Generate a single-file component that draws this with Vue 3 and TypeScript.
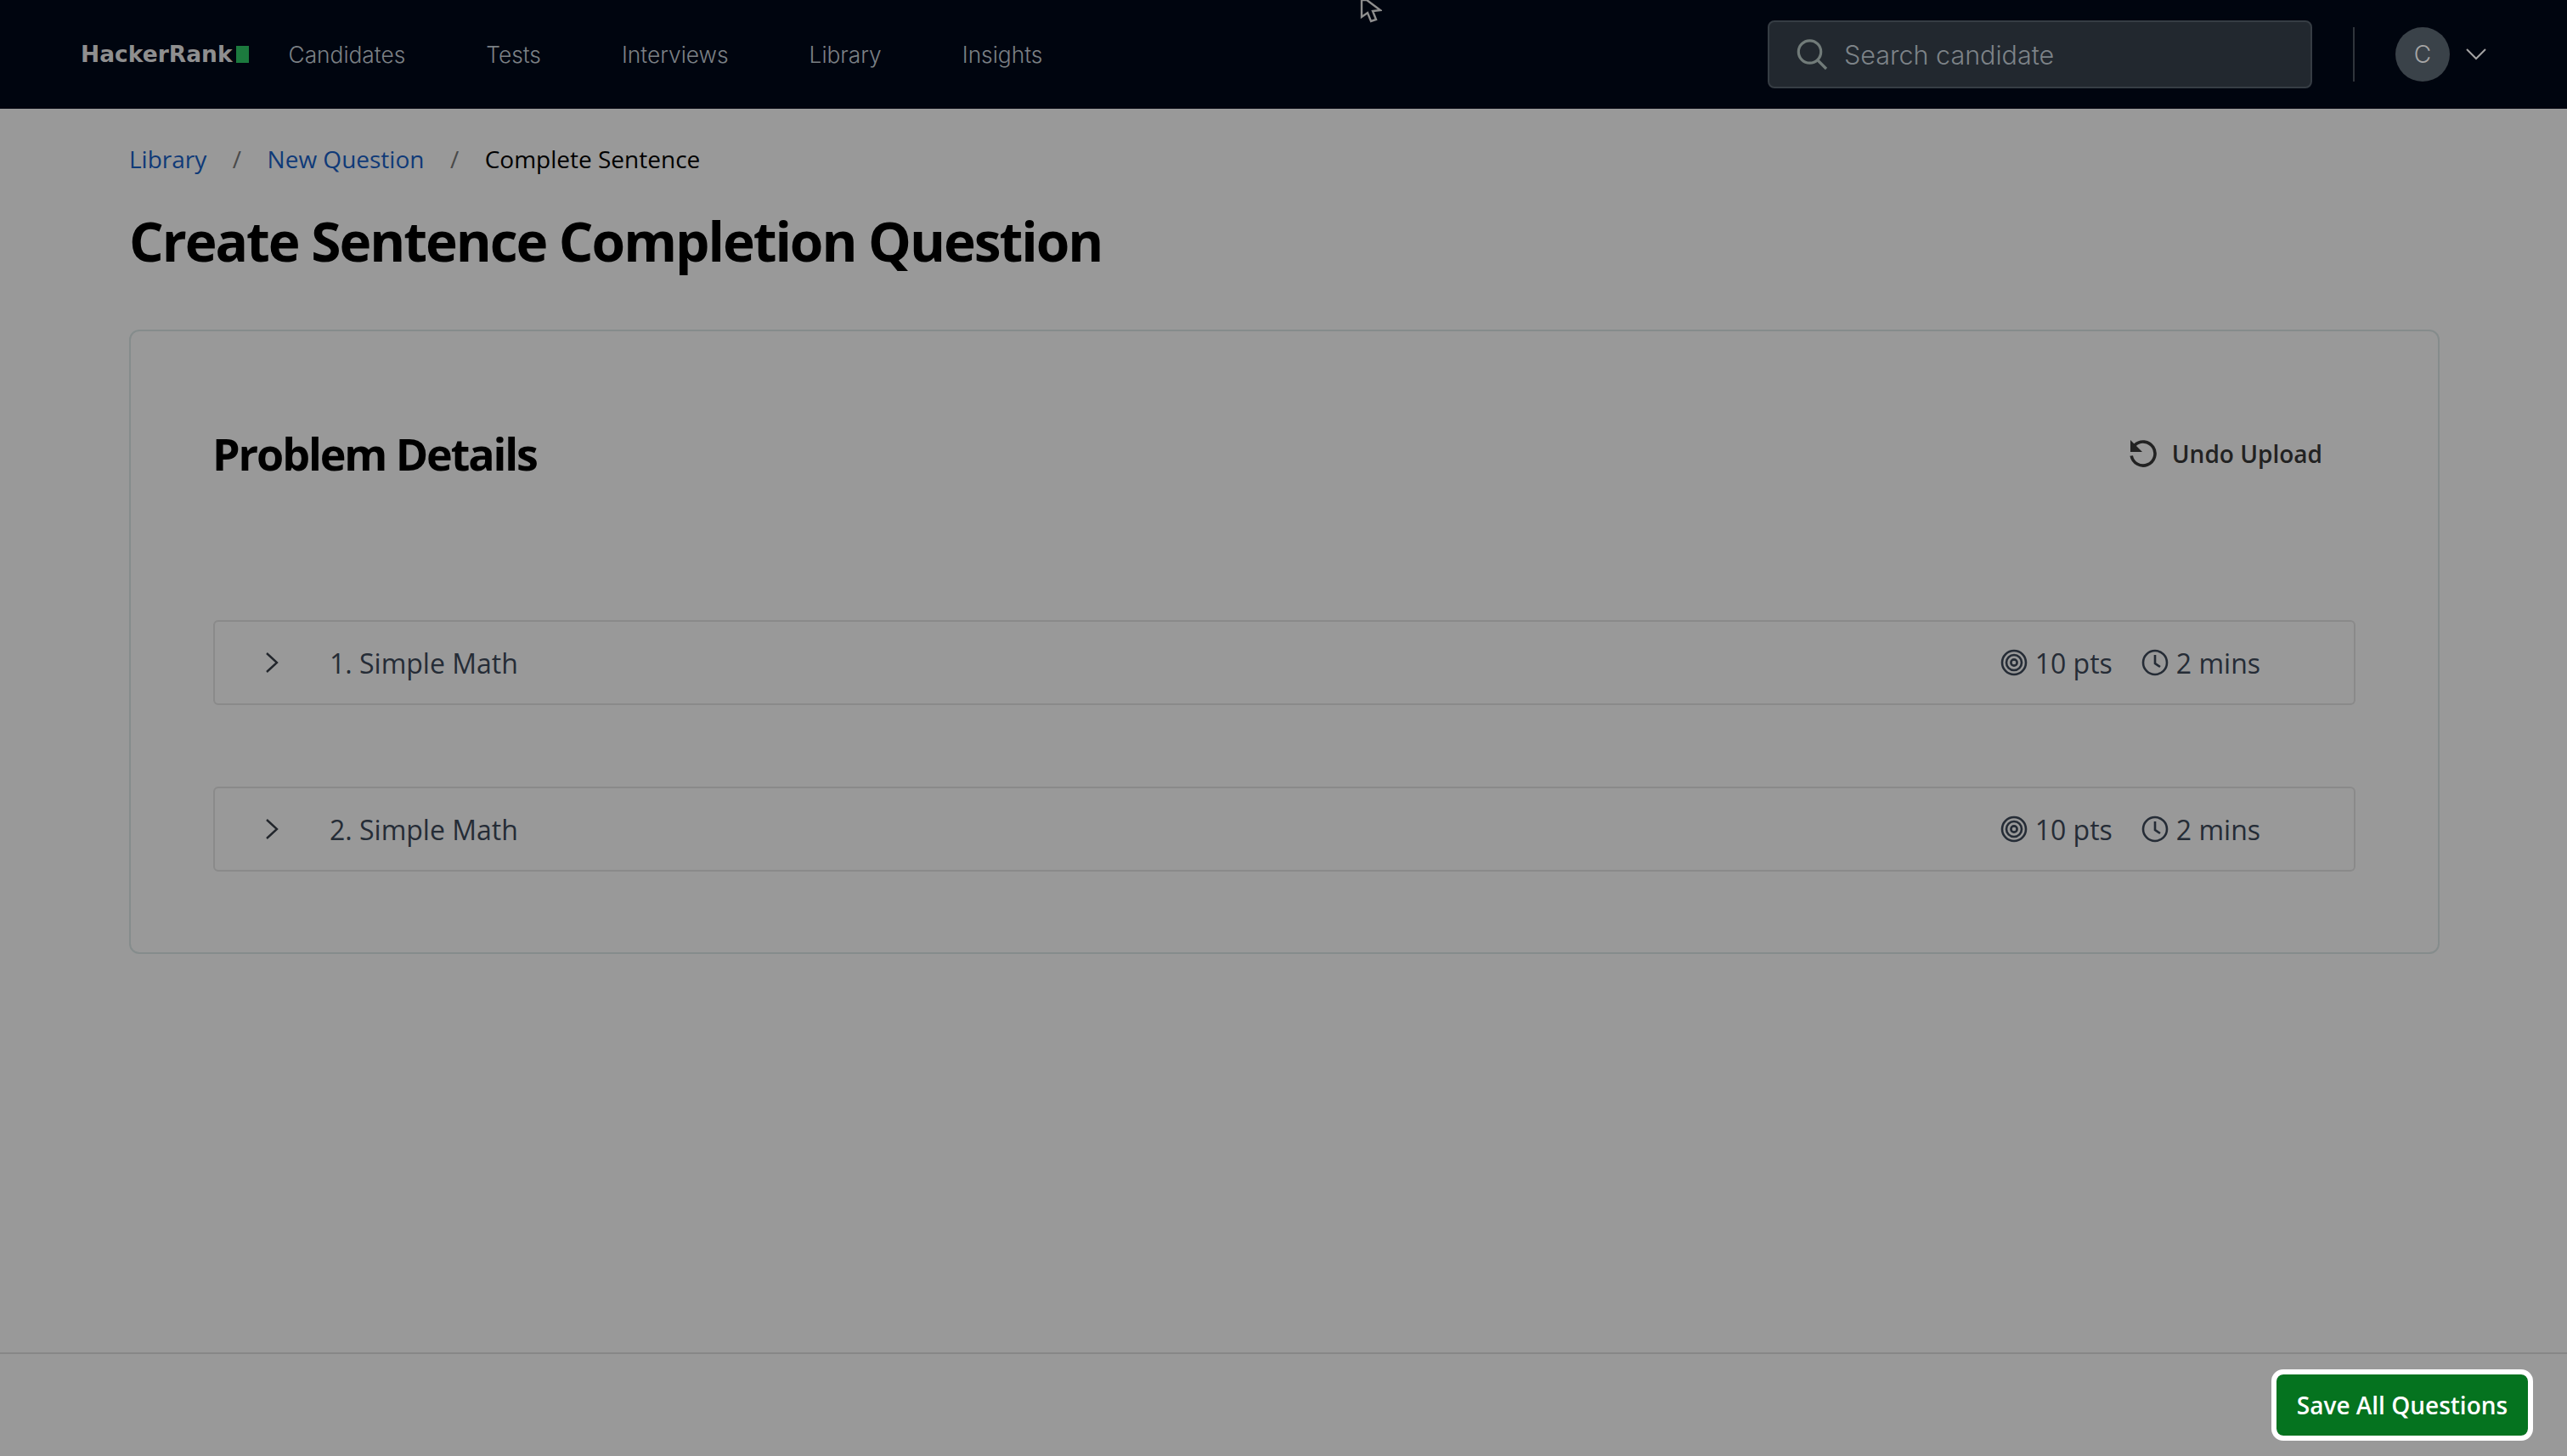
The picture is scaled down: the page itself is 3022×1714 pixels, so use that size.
<template>
  <div class="page">
    <header class="topbar">
      <svg class="cursor" width="26" height="28" viewBox="0 0 26 28">
        <path d="M2 0 L2 20 L9 15 L13 25 L19 23 L15 13 L24 12 L8 0 Z" fill="#00050f" stroke="#8e8e8e" stroke-width="2.4" />
      </svg>
      <div class="logo">
        <span class="logo-text">HackerRank</span>
        <span class="logo-mark"></span>
      </div>
      <nav class="nav">
        <a v-for="item in navItems" :key="item" class="nav-item">{{ item }}</a>
      </nav>
      <div class="search">
        <svg width="38" height="38" viewBox="0 0 38 38" fill="none" stroke="#717b79" stroke-width="3.2">
          <circle cx="15.5" cy="16" r="13.2" />
          <path d="M25 26 L35 36" />
        </svg>
        <span class="search-text">Search candidate</span>
      </div>
      <div class="divider"></div>
      <div class="avatar">C</div>
      <svg class="caret" width="26" height="16" viewBox="0 0 26 16" fill="none" stroke="#a3a3a3" stroke-width="2">
        <path d="M2 2 L13 13 L24 2" />
      </svg>
    </header>

    <main class="content">
      <div class="crumbs">
        <a class="crumb-link">Library</a>
        <span class="crumb-sep">/</span>
        <a class="crumb-link">New Question</a>
        <span class="crumb-sep">/</span>
        <span class="crumb-current">Complete Sentence</span>
      </div>
      <h1 class="title">Create Sentence Completion Question</h1>

      <section class="card">
        <div class="card-head">
          <h2 class="card-title">Problem Details</h2>
          <button class="undo">
            <svg width="32" height="32" viewBox="0 0 32 32" fill="none">
              <path d="M6.1 6.1 A14 14 0 1 1 2.2 18.5" stroke="#222" stroke-width="3.6" />
              <path d="M1 0 L1 14 L15 14 Z" fill="#222" />
            </svg>
            <span>Undo Upload</span>
          </button>
        </div>

        <div class="questions">
          <div v-for="q in questions" :key="q.id" class="question">
            <svg class="chevron" width="16" height="26" viewBox="0 0 16 26" fill="none" stroke="#22262c" stroke-width="2.4">
              <path d="M2 2 L14 13 L2 24" />
            </svg>
            <span class="question-name">{{ q.id }}. {{ q.name }}</span>
            <div class="meta">
              <svg width="32" height="32" viewBox="0 0 32 32" fill="none" stroke="#252c36" stroke-width="2.6">
                <circle cx="16" cy="16" r="14" />
                <circle cx="16" cy="16" r="9" />
                <circle cx="16" cy="16" r="3.6" />
              </svg>
              <span class="meta-text">{{ q.points }} pts</span>
            </div>
            <div class="meta">
              <svg width="32" height="32" viewBox="0 0 32 32" fill="none" stroke="#252c36" stroke-width="2.6">
                <circle cx="16" cy="16" r="14" />
                <path d="M16 7 L16 17 L22 21" />
              </svg>
              <span class="meta-text">{{ q.minutes }} mins</span>
            </div>
          </div>
        </div>
      </section>
    </main>

    <footer class="footer">
      <button class="save">Save All Questions</button>
    </footer>
  </div>
</template>

<script setup lang="ts">
const navItems: string[] = ["Candidates", "Tests", "Interviews", "Library", "Insights"];

const questions = [
  { id: 1, name: "Simple Math", points: 10, minutes: 2 },
  { id: 2, name: "Simple Math", points: 10, minutes: 2 },
];
</script>

<style>
html,
body {
  margin: 0;
  background: #999;
}
</style>

<style scoped>
.page {
  display: flex;
  flex-direction: column;
  height: 1714px;
  background: #999;
  font-family: "Open Sans", sans-serif;
  overflow: hidden;
}

.topbar {
  position: relative;
  display: flex;
  align-items: center;
  height: 128px;
  padding: 0 94px 0 95px;
  box-sizing: border-box;
  background: #00050f;
}

.cursor {
  position: absolute;
  left: 1601px;
  top: 0;
}

.logo {
  display: flex;
  align-items: center;
  gap: 4px;
}

.logo-text {
  font-family: "DejaVu Sans", sans-serif;
  font-weight: 700;
  font-size: 26.5px;
  line-height: 28px;
  color: #8f8f8f;
}

.logo-mark {
  width: 15px;
  height: 20px;
  background: #1c7a3e;
}

.nav {
  display: flex;
  gap: 95px;
  margin-left: 47px;
  flex: 1;
}

.nav-item {
  font-family: Inter, sans-serif;
  font-weight: 300;
  font-size: 26.3px;
  color: #7b8085;
}

.search {
  display: flex;
  align-items: center;
  gap: 18px;
  width: 641px;
  height: 80px;
  padding: 0 0 0 32px;
  box-sizing: border-box;
  background: #22282f;
  border: 2px solid #363d44;
  border-radius: 8px;
}

.search-text {
  font-family: Inter, sans-serif;
  font-weight: 300;
  font-size: 30.5px;
  color: #7d8388;
}

.divider {
  width: 2px;
  height: 64px;
  margin: 0 48px;
  background: #30363c;
}

.avatar {
  display: flex;
  align-items: center;
  justify-content: center;
  width: 64px;
  height: 64px;
  border-radius: 50%;
  background: #3a4249;
  font-family: Inter, sans-serif;
  font-weight: 300;
  font-size: 28px;
  color: #a6a6a6;
}

.caret {
  margin-left: 18px;
}

.content {
  padding: 0 150px 0 152px;
}

.crumbs {
  display: flex;
  align-items: center;
  gap: 30.5px;
  margin-top: 40px;
  font-size: 28px;
  line-height: 38px;
}

.crumb-link {
  color: #0f3a78;
}

.crumb-sep {
  color: #4a4a4a;
}

.crumb-current {
  color: #000;
}

.title {
  margin: 36px 0 0;
  font-size: 64px;
  font-weight: 700;
  line-height: 84px;
  letter-spacing: -2.05px;
  color: #000;
}

.card {
  margin-top: 62px;
  height: 735px;
  padding: 112px 97px 0;
  box-sizing: border-box;
  border: 2px solid #858c8c;
  border-radius: 12px;
}

.card-head {
  display: flex;
  align-items: center;
  justify-content: space-between;
  height: 64px;
  padding-right: 39px;
}

.card-title {
  margin: 0 0 0 -1px;
  font-size: 52px;
  font-weight: 700;
  line-height: 64px;
  letter-spacing: -2.1px;
  color: #000;
}

.undo {
  display: flex;
  align-items: center;
  gap: 18px;
  padding: 0;
  border: 0;
  background: none;
  font-family: inherit;
  font-size: 28px;
  font-weight: 600;
  color: #222;
}

.questions {
  display: flex;
  flex-direction: column;
  gap: 96px;
  margin-top: 164px;
}

.question {
  display: flex;
  align-items: center;
  height: 100px;
  padding: 0 110px 0 59px;
  box-sizing: border-box;
  border: 2px solid #8a8a8a;
  border-radius: 6px;
}

.question-name {
  flex: 1;
  margin-left: 60px;
  font-size: 32px;
  color: #252c36;
}

.meta {
  display: flex;
  align-items: center;
  gap: 9px;
  margin-left: 34px;
}

.meta-text {
  font-size: 32px;
  color: #252c36;
}

.footer {
  display: flex;
  justify-content: flex-end;
  align-items: center;
  margin-top: auto;
  height: 122px;
  padding-right: 46px;
  box-sizing: border-box;
  border-top: 2px solid #878787;
}

.save {
  height: 72px;
  width: 296px;
  padding: 0;
  border: 0;
  border-radius: 8px;
  outline: 6px solid #fff;
  background: #05731f;
  font-family: inherit;
  font-size: 28px;
  font-weight: 600;
  color: #fff;
}
</style>
